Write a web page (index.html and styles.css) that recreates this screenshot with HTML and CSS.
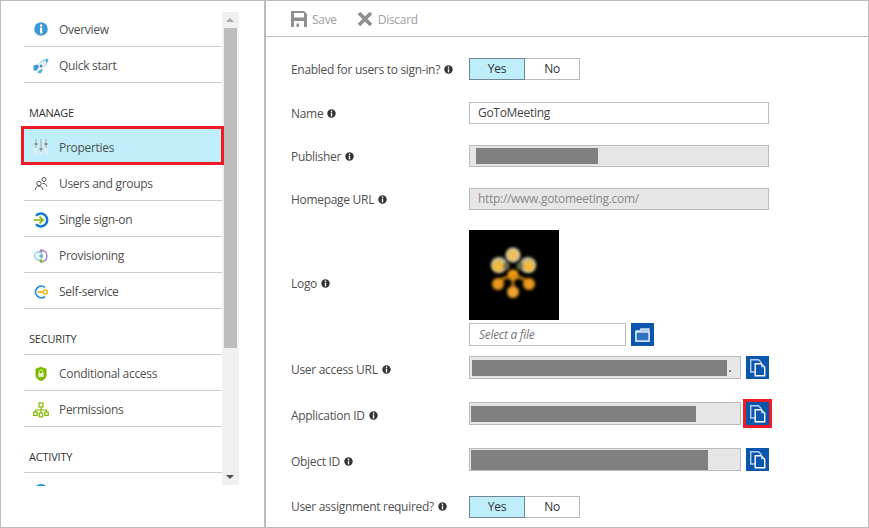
FILE: index.html
```html
<!DOCTYPE html>
<html lang="en">
  <head>
    <meta charset="UTF-8" />
    <title>GoToMeeting - Properties</title>
    <link rel="stylesheet" href="styles.css">
  </head>
  <body>
    <svg class="sprite" width="0" height="0">
      <defs>
        <symbol id="hint" viewBox="0 0 9 9">
          <circle cx="4.5" cy="4.5" r="4.2" fill="#333" />
          <rect x="3.8" y="1.5" width="1.4" height="1.4" fill="#fff" />
          <rect x="3.8" y="3.6" width="1.4" height="3.8" fill="#fff" />
        </symbol>
        <symbol id="copy" viewBox="0 0 23 23">
          <path d="M13 3.700H4.700V16H9" fill="none" stroke="#b5cfeb" stroke-width="1.400" />
          <path d="M12.500 3.700l3 3" fill="none" stroke="#b5cfeb" stroke-width="1.400" />
          <path d="M9.200 7.700h6l3.500 3.500v8.600h-9.500z" fill="#0a56ad" stroke="#fff" stroke-width="1.400" />
          <path d="M15 8l3.300 3.300H15z" fill="#a9c6e6" />
        </symbol>
      </defs>
    </svg>

    <div class="frame">
      <aside class="sidebar">
        <nav class="nav">
          <a class="nav-row">
            <svg class="nav-icon" viewBox="0 0 16 16"><circle cx="8" cy="8" r="6.800" fill="#3c9bd6" /><rect x="7" y="3.500" width="2.200" height="2" fill="#fff" /><rect x="7" y="6.500" width="2.200" height="6" fill="#fff" /></svg>
            Overview
          </a>
          <a class="nav-row">
            <svg class="nav-icon" viewBox="0 0 16 16"><path d="M15.500 .5c-4 .5-8 2.500-10 6.500l3.500 3.500c4-2 6-6 6.500-10z" fill="#59b4d9" /><path d="M12 2.500c-3.500 1-6 3-7.500 5l4 3.500c2.500-1.500 4.500-4 5-6.500z" fill="#e8f1f7" /><circle cx="8" cy="8" r="1.300" fill="#2c7fc0" /><path d="M.5 7.500l4-1 1.500 2-2 4H.5z" fill="#3c9bd6" /><path d="M5.500 12.500l3.500-1.500 1 1.500-2.500 3-3-.5z" fill="#59b4d9" /></svg>
            Quick start
          </a>

          <h3 class="nav-head">MANAGE</h3>
          <a class="nav-row nav-row-selected">
            <svg class="nav-icon" viewBox="0 0 16 16"><rect x="1.500" y="1" width="3" height="15" fill="#e0eff5" /><rect x="6.500" y="1" width="3" height="15" fill="#e0eff5" /><rect x="11.500" y="1" width="3" height="15" fill="#e0eff5" /><path d="M3 0v9M8 0v13M13 0v9" stroke="#8d9da6" stroke-width="1" /><path d="M1.500 5h3M6.500 10h3M11.500 5h3" stroke="#6f7f88" stroke-width="1.500" /></svg>
            Properties
          </a>
          <a class="nav-row">
            <svg class="nav-icon" viewBox="0 0 16 16" fill="none" stroke="#555" stroke-width="1"><circle cx="6" cy="7.500" r="2.200" /><path d="M2 14c.5-2.500 2-4 4-4s3.500 1.500 4 4" /><circle cx="11" cy="3.500" r="2" /><path d="M9.500 7.500c2.500-.5 4 1 4.500 3" /></svg>
            Users and groups
          </a>
          <a class="nav-row">
            <svg class="nav-icon" viewBox="0 0 16 16"><path d="M3 3.800a6.400 6.400 0 1 1 0 8.400" fill="none" stroke="#0f7ad4" stroke-width="2.500" /><path d="M.5 8h9.500M6.500 4.700L10 8l-3.500 3.300" fill="none" stroke="#7fba00" stroke-width="1.700" /></svg>
            Single sign-on
          </a>
          <a class="nav-row">
            <svg class="nav-icon" viewBox="0 0 16 16" fill="none" stroke-width="1.300"><circle cx="5.500" cy="8" r="4" stroke="#8ccfe8" /><path d="M8 2a6 6 0 0 1 0 12" stroke="#a67ac4" /><circle cx="8" cy="3" r="1.600" fill="#a67ac4" stroke="none" /><circle cx="8" cy="8" r="1.700" fill="#59b4d9" stroke="none" /><circle cx="8" cy="13" r="1.600" fill="#7fba00" stroke="none" /></svg>
            Provisioning
          </a>
          <a class="nav-row">
            <svg class="nav-icon" viewBox="0 0 16 16" fill="none"><path d="M12 3.500a5.800 5.800 0 1 0 0 9" stroke="#2c8fdc" stroke-width="1.800" /><path d="M4.500 8H10" stroke="#f0b71c" stroke-width="1.800" /><circle cx="12.300" cy="8" r="2" stroke="#f0b71c" stroke-width="1.600" /></svg>
            Self-service
          </a>

          <h3 class="nav-head">SECURITY</h3>
          <a class="nav-row">
            <svg class="nav-icon" viewBox="0 0 16 16"><path d="M8 .8l5.500 2v6.500c0 3-3 5-5.500 6-2.500-1-5.500-3-5.500-6V2.800z" fill="#7fba00" /><rect x="5.300" y="7" width="5.400" height="4" fill="#e6f2c4" /><path d="M6.300 7V5.500a1.700 1.700 0 0 1 3.400 0V7" fill="none" stroke="#e6f2c4" /></svg>
            Conditional access
          </a>
          <a class="nav-row">
            <svg class="nav-icon" viewBox="0 0 16 16" fill="#fff" stroke="#7fba00" stroke-width="1.200"><path d="M8 5v9M2.500 10V8h11v2" fill="none" /><rect x="6" y="1" width="4" height="4" /><rect x=".8" y="10" width="3.400" height="3.400" /><rect x="6.300" y="11" width="3.400" height="3.800" /><rect x="11.800" y="10" width="3.400" height="3.400" /></svg>
            Permissions
          </a>

          <h3 class="nav-head">ACTIVITY</h3>
          <a class="nav-row">
            <svg class="nav-icon" viewBox="0 0 16 16"><circle cx="8" cy="8" r="7" fill="none" stroke="#2c8fdc" stroke-width="2" /></svg>
          </a>
        </nav>

        <div class="scrollbar">
          <span class="arrow arrow-up"></span>
          <div class="thumb"></div>
          <span class="arrow arrow-down"></span>
        </div>
      </aside>

      <main class="content">
        <div class="toolbar">
          <span class="tool">
            <svg class="tool-icon" viewBox="0 0 16 16" fill="#8f8f8f"><path d="M0 0h13l3 3v13H0z" /><rect x="3" y="2" width="10" height="4.500" fill="#fff" /><rect x="3" y="10" width="10" height="6" fill="#fff" /><rect x="5.500" y="12.500" width="2.500" height="3.500" fill="#8f8f8f" /></svg>
            Save
          </span>
          <span class="tool">
            <svg class="tool-icon" viewBox="0 0 16 16"><path d="M2 2l12 12M14 2L2 14" stroke="#8f8f8f" stroke-width="3.800" /></svg>
            Discard
          </span>
        </div>

        <form class="form">
          <div class="row row-toggle-first">
            <label class="field-label">Enabled for users to sign-in? <svg class="hint"><use href="#hint" /></svg></label>
            <div class="toggle"><span class="toggle-yes">Yes</span><span class="toggle-no">No</span></div>
          </div>
          <div class="row row-name">
            <label class="field-label">Name <svg class="hint"><use href="#hint" /></svg></label>
            <div class="input">GoToMeeting</div>
          </div>
          <div class="row row-publisher">
            <label class="field-label">Publisher <svg class="hint"><use href="#hint" /></svg></label>
            <div class="input input-off input-publisher"><span class="redact redact-publisher"></span></div>
          </div>
          <div class="row row-home">
            <label class="field-label">Homepage URL <svg class="hint"><use href="#hint" /></svg></label>
            <div class="input input-off input-home">http://www.gotomeeting.com/</div>
          </div>
          <div class="row row-logo">
            <label class="field-label">Logo <svg class="hint"><use href="#hint" /></svg></label>
            <div class="logo-box">
              <svg class="logo" viewBox="0 0 90 90">
                <defs>
                  <filter id="soft" x="-50%" y="-50%" width="200%" height="200%"><feGaussianBlur stdDeviation="1.500" /></filter>
                  <filter id="halo" x="-50%" y="-50%" width="200%" height="200%"><feGaussianBlur stdDeviation="1.500" /></filter>
                </defs>
                <rect width="90" height="90" fill="#000" />
                <g filter="url(#halo)" fill="#c4bf9f">
                  <circle cx="44" cy="25" r="7.500" />
                  <circle cx="30" cy="35" r="8" />
                  <circle cx="59" cy="35" r="8" />
                </g>
                <g filter="url(#soft)">
                  <circle cx="37" cy="36" r="3.500" fill="#6b6a50" />
                  <circle cx="51" cy="36" r="3.500" fill="#6b6a50" />
                  <circle cx="44" cy="25" r="5.500" fill="#f0c060" />
                  <circle cx="29" cy="36" r="5.500" fill="#f2b93c" />
                  <circle cx="60" cy="36" r="5.500" fill="#f2b93c" />
                  <circle cx="29" cy="54" r="6" fill="#e8981c" />
                  <circle cx="60" cy="54" r="6" fill="#e8981c" />
                  <circle cx="44" cy="62" r="6" fill="#f0a030" />
                  <circle cx="44" cy="45" r="5.500" fill="#f5a416" />
                  <path d="M44 45L31 50M44 45L57 50M44 45V58" stroke="#d98a10" stroke-width="2.500" />
                </g>
              </svg>
              <div class="file-row">
                <div class="input input-file">Select a file</div>
                <button class="square-btn file-btn" type="button">
                  <svg width="23" height="23" viewBox="0 0 23 23"><path d="M5 8h4l1-2h8v12H5z" fill="#9dbde2" stroke="#d6e4f4" stroke-width="1.300" /><rect x="5" y="9" width="13" height="9" fill="#2f72bd" stroke="#e8f0fa" stroke-width="1.300" /></svg>
                </button>
              </div>
            </div>
          </div>
          <div class="row row-copy row-access">
            <label class="field-label">User access URL <svg class="hint"><use href="#hint" /></svg></label>
            <div class="input input-off input-copy"><span class="redact redact-access"></span><span class="dot"></span></div>
            <button class="square-btn" type="button"><svg width="23" height="23"><use href="#copy" /></svg></button>
          </div>
          <div class="row row-copy row-app">
            <label class="field-label">Application ID <svg class="hint"><use href="#hint" /></svg></label>
            <div class="input input-off input-copy"><span class="redact redact-app"></span></div>
            <button class="square-btn square-btn-marked" type="button"><svg width="23" height="23"><use href="#copy" /></svg></button>
          </div>
          <div class="row row-copy row-object">
            <label class="field-label">Object ID <svg class="hint"><use href="#hint" /></svg></label>
            <div class="input input-off input-copy"><span class="redact redact-object"></span></div>
            <button class="square-btn" type="button"><svg width="23" height="23"><use href="#copy" /></svg></button>
          </div>
          <div class="row row-assign">
            <label class="field-label">User assignment required? <svg class="hint"><use href="#hint" /></svg></label>
            <div class="toggle"><span class="toggle-yes">Yes</span><span class="toggle-no">No</span></div>
          </div>
        </form>
      </main>
    </div>
  </body>
</html>
```

FILE: styles.css
```css
* {
  box-sizing: border-box;
}

body {
  margin: 0;
  font-family: "Open Sans", "Noto Sans", sans-serif;
  font-size: 12px;
  letter-spacing: -0.3px;
  color: #505050;
  background: #fff;
}

.sprite {
  position: absolute;
}

.frame {
  display: flex;
  width: 869px;
  height: 528px;
  border: 1px solid #bbb;
  overflow: hidden;
}

/* left blade menu */
.sidebar {
  display: flex;
  align-items: flex-start;
  flex: none;
  width: 265px;
  height: 100%;
  padding: 11px 0 0 23px;
  border-right: 2px solid #bbb;
}

.nav {
  width: 198px;
  height: 473px;
  flex: none;
}

.nav-row {
  display: flex;
  align-items: center;
  height: 36px;
  padding: 2px 0 0 9px;
  border-bottom: 1px solid #ccc;
}

.nav-row:first-child {
  height: 35px;
  padding-top: 0;
}

.nav-row:last-child {
  height: 13px;
  align-items: flex-start;
  padding-top: 11px;
  overflow: hidden;
  border-bottom: 0;
}

.nav-icon {
  flex: none;
  width: 16px;
  height: 16px;
  margin-right: 10px;
}

.nav-head {
  height: 46px;
  margin: 0;
  padding: 22px 0 0 5px;
  font-size: 11px;
  font-weight: 400;
  line-height: 15px;
  letter-spacing: -0.2px;
  color: #333;
  border-bottom: 1px solid #ccc;
}

.nav-row-selected {
  position: relative;
  z-index: 1;
  height: 39px;
  width: 203px;
  margin: -3px -3px 0;
  padding: 3px 0 0 9px;
  background: #bdeefa;
  border: 3px solid #ed1c24;
}

.scrollbar {
  position: relative;
  flex: none;
  width: 17px;
  height: 473px;
  background: #f0f0f0;
}

.thumb {
  width: 13px;
  height: 320px;
  margin: 16px 0 0 2px;
  background: #bdbdbd;
}

.arrow {
  position: absolute;
  left: 4px;
  border-left: 4px solid transparent;
  border-right: 4px solid transparent;
}

.arrow-up {
  top: 6px;
  border-bottom: 4px solid #aaa;
}

.arrow-down {
  bottom: 6px;
  border-top: 4px solid #505050;
}

/* right side */
.content {
  flex: 1;
  min-width: 0;
}

.toolbar {
  display: flex;
  align-items: center;
  gap: 20px;
  height: 36px;
  padding-left: 25px;
  border-bottom: 1px solid #bbb;
  color: #a0a0a0;
}

.tool {
  display: flex;
  align-items: center;
  gap: 5px;
  padding-top: 1px;
}

.tool-icon {
  width: 16px;
  height: 16px;
}

.form {
  padding-left: 25px;
}

.row {
  display: flex;
  align-items: center;
}

.row-toggle-first { margin-top: 21px; }
.row-name { margin-top: 22px; }
.row-publisher { margin-top: 21px; }
.row-home { margin-top: 21px; }
.row-logo { margin-top: 20px; }
.row-access { margin-top: 10px; }
.row-app { margin-top: 23px; }
.row-object { margin-top: 23px; }
.row-assign { margin-top: 25px; }

.field-label {
  display: flex;
  align-items: center;
  gap: 4px;
  flex: none;
  width: 178px;
}

.row-logo .field-label {
  padding-bottom: 10px;
}

.row-copy .field-label {
  padding-top: 4px;
}

.row-assign .field-label {
  padding-bottom: 2px;
}

.hint {
  flex: none;
  width: 9px;
  height: 9px;
}

.toggle {
  display: flex;
  width: 111px;
  height: 22px;
  line-height: 20px;
  text-align: center;
  color: #333;
}

.toggle-yes {
  width: 56px;
  background: #bdeefa;
  border: 1px solid #6e8791;
}

.toggle-no {
  width: 55px;
  border: 1px solid #bbb;
  border-left: 0;
}

.input {
  width: 300px;
  height: 22px;
  padding-left: 8px;
  line-height: 20px;
  color: #444;
  border: 1px solid #bbb;
}

.input-off {
  background: #e6e6e6;
  color: #8a8a8a;
  display: flex;
  align-items: center;
}

.input-publisher {
  padding-left: 6px;
}

.input-copy {
  width: 272px;
  height: 23px;
  padding-left: 2px;
}

.row-app .input-copy,
.row-object .input-copy {
  padding-left: 1px;
}

.redact {
  display: block;
  flex: none;
  background: #808080;
}

.redact-publisher { width: 122px; height: 16px; }
.redact-access { width: 255px; height: 16px; }
.redact-app { width: 225px; height: 16px; }
.redact-object { width: 237px; height: 20px; }

.dot {
  width: 2px;
  height: 2px;
  margin: 6px 0 0 2px;
  background: #808080;
}

.logo-box {
  display: flex;
  flex-direction: column;
  gap: 3px;
}

.logo {
  display: block;
  width: 90px;
  height: 90px;
}

.file-row {
  display: flex;
  align-items: center;
  gap: 5px;
}

.input-file {
  width: 157px;
  height: 23px;
  padding: 1px 0 0 9px;
  font-style: italic;
  color: #777;
}

.square-btn {
  display: block;
  flex: none;
  width: 23px;
  height: 23px;
  padding: 0;
  border: 0;
  background: #0a56ad;
}

.square-btn svg {
  display: block;
}

.row-copy .square-btn {
  margin-left: 5px;
}

.square-btn-marked {
  outline: 3px solid #ed1c24;
}
```
